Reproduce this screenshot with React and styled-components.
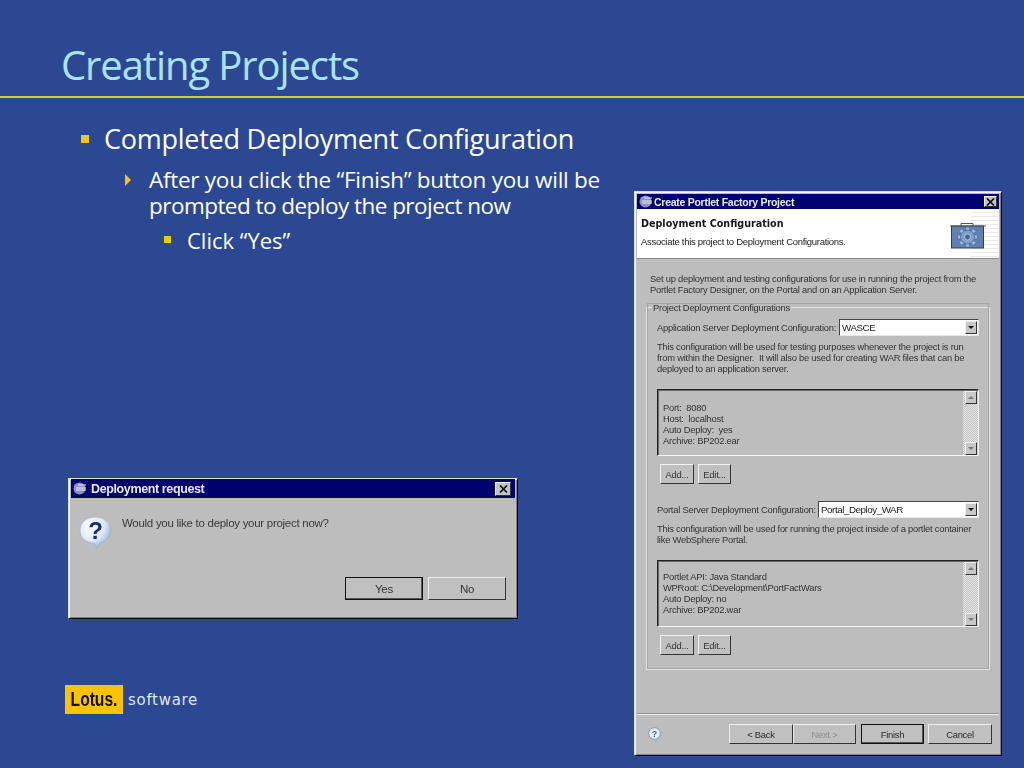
import React from 'react';
import styled, { createGlobalStyle } from 'styled-components';

const GlobalStyle = createGlobalStyle`
  html, body {
    margin: 0;
    padding: 0;
    background: #2c4892;
  }
`;

const Slide = styled.div`
  width: 1024px;
  height: 768px;
  overflow: hidden;
  background: #2c4892;
  font-family: "DejaVu Sans", sans-serif;
  color: #fff;
`;

const TitleBar = styled.header`
  height: 98px;
  box-sizing: border-box;
  padding: 40px 0 0 61px;
  border-bottom: 2px solid #eec22e;
`;

const Title = styled.h1`
  margin: 0;
  font-family: "Open Sans", sans-serif;
  font-weight: 400;
  font-size: 40px;
  letter-spacing: -1.1px;
  line-height: 50px;
  color: #a9e4fb;
  white-space: nowrap;
`;

const Body = styled.div`
  display: flex;
`;

const LeftColumn = styled.div`
  width: 634px;
  flex: none;
`;

const Bullets = styled.div`
  height: 380px;
  box-sizing: border-box;
  padding: 23px 0 0 81px;
`;

const Bullet = styled.div`
  display: flex;
  font-family: "Open Sans", sans-serif;
  font-size: ${p => p.$size}px;
  letter-spacing: ${p => p.$track}px;
  line-height: ${p => p.$line}px;
  margin-left: ${p => p.$indent || 0}px;
  margin-top: ${p => p.$top || 0}px;
  white-space: nowrap;
`;

const BulletLine = styled.div`
  letter-spacing: ${p => p.$track}px;
`;

const Square = styled.span`
  flex: none;
  width: ${p => p.$box}px;
  height: ${p => p.$box}px;
  background: #f6c21d;
  margin-top: ${p => p.$top}px;
  margin-right: ${p => p.$gap}px;
`;

const Arrow = styled.span`
  flex: none;
  width: 0;
  height: 0;
  border-left: 6px solid #f6c21d;
  border-top: 6px solid transparent;
  border-bottom: 6px solid transparent;
  margin-top: 7px;
  margin-right: 18px;
`;

const Win = styled.div`
  box-sizing: border-box;
  background: #bdbdbd;
  border: 1px solid #0b0b0b;
  border-top-color: #dcdcdc;
  border-left-color: #dcdcdc;
  box-shadow: inset 1px 1px 0 #f4f4f4, inset -1px -1px 0 #808080;
  padding: 2px;
  display: flex;
  flex-direction: column;
  font-family: "Liberation Sans", sans-serif;
  font-size: 9.4px;
  letter-spacing: -0.24px;
  color: #333;
  filter: blur(0.35px);
`;

const SmallWin = styled(Win)`
  width: 450px;
  height: 141px;
  margin-left: 68px;
  padding-top: 0;
`;

const BigWin = styled(Win)`
  width: 368px;
  height: 565px;
  margin-top: 93px;
`;

const Caption = styled.div`
  flex: none;
  height: ${p => p.$h}px;
  background: #00006e;
  display: flex;
  align-items: center;
  padding: 0 ${p => p.$right}px 0 2px;
  color: #e9e9f4;
  font-family: "Liberation Sans", sans-serif;
  font-weight: 700;
  font-size: ${p => p.$size}px;
  letter-spacing: ${p => p.$track}px;
`;

const CaptionText = styled.span`
  margin-left: ${p => p.$gap}px;
  flex: 1;
  white-space: nowrap;
`;

const CloseBox = styled.span`
  flex: none;
  width: ${p => p.$s}px;
  height: ${p => p.$s - 2}px;
  background: #c4c4c4;
  border: 1px solid;
  border-color: #f0f0f0 #333 #333 #f0f0f0;
  box-sizing: border-box;
  display: flex;
  align-items: center;
  justify-content: center;
`;

const Banner = styled.div`
  flex: none;
  height: 50px;
  box-sizing: border-box;
  padding: 8px 0 0 4px;
  background: repeating-linear-gradient(180deg, #fff 0 3px, #e6e8ee 3px 4px) right top / 28px 100% no-repeat, #fff;
  border-bottom: 1px solid #8a8a8a;
  position: relative;
`;

const BannerTitle = styled.div`
  font-family: "DejaVu Sans", sans-serif;
  font-weight: 700;
  font-size: 9.6px;
  letter-spacing: 0;
  line-height: 13px;
  color: #161616;
`;

const BannerText = styled.div`
  font-size: 9.5px;
  letter-spacing: -0.3px;
  line-height: 12px;
  margin-top: 6px;
  color: #222;
`;

const BannerIcon = styled.svg`
  position: absolute;
  right: 13px;
  top: 14px;
`;

const WizardBody = styled.div`
  flex: 1;
  padding: 14px 9px 0 9px;
`;

const Para = styled.p`
  margin: ${p => p.$margin || '0'};
  line-height: 11px;
  white-space: pre;
`;

const Group = styled.fieldset`
  margin: 7px 0 0;
  padding: 2px 10px 13px 10px;
  height: 368px;
  box-sizing: border-box;
  min-width: 0;
  border: 1px solid #e4e4e4;
  outline: 1px solid #a5a5a5;
  outline-offset: -2px;
`;

const Legend = styled.legend`
  padding: 0 1px;
  margin-left: -5px;
  line-height: 11px;
  background: #bdbdbd;
`;

const FieldRow = styled.div`
  display: flex;
  align-items: center;
  justify-content: space-between;
  height: 17px;
  margin-top: ${p => p.$top || 0}px;
  white-space: nowrap;
`;

const Select = styled.div`
  width: ${p => p.$w}px;
  height: 17px;
  box-sizing: border-box;
  background: #fff;
  border: 1px solid;
  border-color: #444 #e8e8e8 #e8e8e8 #444;
  display: flex;
  align-items: center;
  padding: 0 1px 0 2px;
  font-size: 9.8px;
  letter-spacing: -0.45px;
  color: #222;
`;

const SelectValue = styled.span`
  flex: 1;
`;

const ArrowBtn = styled.span`
  flex: none;
  width: 12px;
  height: 13px;
  box-sizing: border-box;
  background: #c8c8c8;
  border: 1px solid;
  border-color: #eee #333 #333 #eee;
  display: flex;
  align-items: center;
  justify-content: center;
  color: ${p => p.$color || '#111'};
`;

const Tri = styled.span`
  width: 0;
  height: 0;
  border-left: 3px solid transparent;
  border-right: 3px solid transparent;
  ${p => (p.$up ? 'border-bottom: 3px solid currentColor;' : 'border-top: 3px solid currentColor;')}
`;

const ListBox = styled.div`
  height: 67px;
  margin-top: ${p => p.$top}px;
  box-sizing: border-box;
  border: 1px solid;
  border-color: #222 #f2f2f2 #f4f4f4 #222;
  box-shadow: inset 1px 1px 0 #666;
  display: flex;
  background: #bdbdbd;
`;

const ListText = styled.div`
  flex: 1;
  padding: ${p => p.$top}px 0 0 5px;
  line-height: 11px;
  white-space: pre;
`;

const ScrollTrack = styled.div`
  flex: none;
  width: 15px;
  margin: 1px 0 0;
  display: flex;
  flex-direction: column;
  justify-content: space-between;
  align-items: center;
  background: repeating-conic-gradient(#e4e4e4 0 25%, #c4c4c4 0 50%) 0 0 / 2px 2px;
`;

const ButtonRow = styled.div`
  display: flex;
  gap: ${p => p.$gap}px;
  margin: ${p => p.$margin};
`;

const SmallBtn = styled.span`
  width: ${p => p.$w}px;
  height: 20px;
  box-sizing: border-box;
  background: #c0c0c0;
  border: 1px solid;
  border-color: #f2f2f2 #333 #333 #f2f2f2;
  display: flex;
  align-items: center;
  justify-content: center;
`;

const Footer = styled.div`
  flex: none;
  height: 40px;
  box-sizing: border-box;
  border-top: 1px solid #8d8d8d;
  box-shadow: inset 0 1px 0 #f0f0f0;
  display: flex;
  align-items: flex-start;
  padding: 10px 7px 0 11px;
`;

const HelpIcon = styled.svg`
  flex: none;
  margin: 3px auto 0 0;
`;

const WizBtn = styled.span`
  width: ${p => p.$w}px;
  height: 20px;
  box-sizing: border-box;
  background: #c0c0c0;
  border: 1px solid;
  border-color: #eee #333 #333 #eee;
  ${p => p.$default && 'outline: 1px solid #111; outline-offset: -1px; box-shadow: inset -1px -1px 0 #555;'}
  display: flex;
  align-items: center;
  justify-content: center;
  color: ${p => (p.$disabled ? '#8b8b8b' : '#2a2a2a')};
  margin-left: ${p => p.$left || 0}px;
`;

const Message = styled.div`
  flex: 1;
  display: flex;
  padding: 18px 0 0 8px;
`;

const MessageText = styled.div`
  margin-left: 10px;
  font-size: 11.5px;
  letter-spacing: -0.28px;
  line-height: 15px;
  color: #3a3a3a;
`;

const DialogBtns = styled.div`
  display: flex;
  justify-content: flex-end;
  gap: 5px;
  padding: 0 9px 16px 0;
`;

const DialogBtn = styled.span`
  width: 78px;
  height: 23px;
  box-sizing: border-box;
  background: #c0c0c0;
  border: 1px solid;
  border-color: #eee #333 #333 #eee;
  ${p => p.$default && 'outline: 1px solid #111; outline-offset: -1px; box-shadow: inset -1px -1px 0 #555;'}
  display: flex;
  align-items: center;
  justify-content: center;
  font-size: 11.5px;
  color: #333;
`;

const LogoRow = styled.div`
  display: flex;
  align-items: center;
  margin: 66px 0 0 65px;
`;

const LogoBox = styled.div`
  width: 58px;
  height: 29px;
  background: #fcc400;
  color: #111;
  display: flex;
  align-items: center;
  justify-content: center;
  font-family: "Liberation Sans", sans-serif;
  font-weight: 700;
  font-size: 20px;
`;

const LogoMark = styled.span`
  display: inline-block;
  transform: scaleX(0.78);
`;

const LogoWord = styled.span`
  margin-left: 5px;
  font-family: "DejaVu Sans", sans-serif;
  font-size: 15px;
  letter-spacing: 0.7px;
  color: #dfe6f5;
`;

const EclipseIcon = () => (
  <svg width="13" height="13" viewBox="0 0 13 13" style={{ flex: 'none' }}>
    <circle cx="6.5" cy="6.5" r="6" fill="#8f8fc4" />
    <path d="M5 3h8M3 6h10M3 8h10" stroke="#e8e8f4" strokeWidth="1" fill="none" />
  </svg>
);

const CloseX = () => (
  <svg width="9" height="8" viewBox="0 0 9 8">
    <path d="M1 0.5l7 7M8 0.5l-7 7" stroke="#111" strokeWidth="1.7" fill="none" />
  </svg>
);

const QuestionIcon = () => (
  <svg width="33" height="34" viewBox="0 0 33 34" style={{ flex: 'none' }}>
    <defs>
      <radialGradient id="bubble" cx="35%" cy="30%" r="75%">
        <stop offset="0%" stopColor="#ffffff" />
        <stop offset="60%" stopColor="#dbe8f6" />
        <stop offset="100%" stopColor="#8aa9d4" />
      </radialGradient>
    </defs>
    <path d="M16.500 1C25 1 32 6.500 32 14S26 26 21 27L18 33L15.500 27.500C7 27 1 22 1 14S8 1 16.500 1Z" fill="url(#bubble)" stroke="#9ab0d0" strokeWidth="0.7" />
    <text x="16.500" y="23" textAnchor="middle" fontFamily="Liberation Sans, sans-serif" fontWeight="700" fontSize="24" fill="#1d2c78">?</text>
  </svg>
);

const TEETH = [0, 45, 90, 135, 180, 225, 270, 315];

const GearCase = () => (
  <BannerIcon width="36" height="26" viewBox="0 0 36 26">
    <path d="M11 3V0.500h12V3" fill="none" stroke="#555" strokeWidth="1" />
    <rect x="1.500" y="3" width="32" height="22" fill="#5f81b0" stroke="#27405f" />
    <path d="M0 3h36" stroke="#555" strokeWidth="1" />
    <g transform="translate(17.500 14)">
      {TEETH.map(a => (
        <rect key={a} x="-2" y="-10" width="4" height="5" fill="#9db8da" stroke="#35598c" strokeWidth="0.5" transform={`rotate(${a})`} />
      ))}
      <circle r="7" fill="#7f9fc8" stroke="#35598c" strokeWidth="0.6" />
      <circle r="3" fill="#3f6496" stroke="#c4d5ea" strokeWidth="0.8" />
    </g>
  </BannerIcon>
);

const Scroll = () => (
  <ScrollTrack>
    <ArrowBtn $color="#777"><Tri $up /></ArrowBtn>
    <ArrowBtn $color="#777"><Tri /></ArrowBtn>
  </ScrollTrack>
);

const App = () => (
  <Slide>
    <GlobalStyle />
    <TitleBar>
      <Title>Creating Projects</Title>
    </TitleBar>
    <Body>
      <LeftColumn>
        <Bullets>
          <Bullet $size={27} $track={-0.25} $line={36}>
            <Square $box={8} $top={14} $gap={15} />
            Completed Deployment Configuration
          </Bullet>
          <Bullet $size={22.5} $line={26} $indent={44} $top={10}>
            <Arrow />
            <div>
              <BulletLine $track={-0.27}>After you click the “Finish” button you will be</BulletLine>
              <BulletLine $track={-0.54}>prompted to deploy the project now</BulletLine>
            </div>
          </Bullet>
          <Bullet $size={22} $track={0} $line={26} $indent={83} $top={8}>
            <Square $box={7} $top={9} $gap={16} />
            Click “Yes”
          </Bullet>
        </Bullets>
        <SmallWin>
          <Caption $h={19} $size={12.5} $track={-0.38} $right={4}>
            <EclipseIcon />
            <CaptionText $gap={5}>Deployment request</CaptionText>
            <CloseBox $s={16}><CloseX /></CloseBox>
          </Caption>
          <Message>
            <QuestionIcon />
            <MessageText>Would you like to deploy your project now?</MessageText>
          </Message>
          <DialogBtns>
            <DialogBtn $default>Yes</DialogBtn>
            <DialogBtn>No</DialogBtn>
          </DialogBtns>
        </SmallWin>
        <LogoRow>
          <LogoBox><LogoMark>Lotus.</LogoMark></LogoBox>
          <LogoWord>software</LogoWord>
        </LogoRow>
      </LeftColumn>
      <BigWin>
        <Caption $h={15} $size={10.5} $track={-0.27} $right={2}>
          <EclipseIcon />
          <CaptionText $gap={2}>Create Portlet Factory Project</CaptionText>
          <CloseBox $s={13}><CloseX /></CloseBox>
        </Caption>
        <Banner>
          <BannerTitle>Deployment Configuration</BannerTitle>
          <BannerText>Associate this project to Deployment Configurations.</BannerText>
          <GearCase />
        </Banner>
        <WizardBody>
          <Para $margin="0 0 0 4px">{'Set up deployment and testing configurations for use in running the project from the\nPortlet Factory Designer, on the Portal and on an Application Server.'}</Para>
          <Group>
            <Legend>Project Deployment Configurations</Legend>
            <FieldRow $top={4}>
              <span>Application Server Deployment Configuration:</span>
              <Select $w={140}>
                <SelectValue>WASCE</SelectValue>
                <ArrowBtn><Tri /></ArrowBtn>
              </Select>
            </FieldRow>
            <Para $margin="5px 0 0">{'This configuration will be used for testing purposes whenever the project is run\nfrom within the Designer.  It will also be used for creating WAR files that can be\ndeployed to an application server.'}</Para>
            <ListBox $top={15}>
              <ListText $top={12}>{'Port:  8080\nHost:  localhost\nAuto Deploy:  yes\nArchive: BP202.ear'}</ListText>
              <Scroll />
            </ListBox>
            <ButtonRow $gap={4} $margin="8px 0 0 3px">
              <SmallBtn $w={34}>Add...</SmallBtn>
              <SmallBtn $w={33}>Edit...</SmallBtn>
            </ButtonRow>
            <FieldRow $top={17}>
              <span>Portal Server Deployment Configuration:</span>
              <Select $w={161}>
                <SelectValue>Portal_Deploy_WAR</SelectValue>
                <ArrowBtn><Tri /></ArrowBtn>
              </Select>
            </FieldRow>
            <Para $margin="5px 0 0">{'This configuration will be used for running the project inside of a portlet container\nlike WebSphere Portal.'}</Para>
            <ListBox $top={15}>
              <ListText $top={10}>{'Portlet API: Java Standard\nWPRoot: C:\\Development\\PortFactWars\nAuto Deploy: no\nArchive: BP202.war'}</ListText>
              <Scroll />
            </ListBox>
            <ButtonRow $gap={4} $margin="8px 0 0 3px">
              <SmallBtn $w={34}>Add...</SmallBtn>
              <SmallBtn $w={33}>Edit...</SmallBtn>
            </ButtonRow>
          </Group>
        </WizardBody>
        <Footer>
          <HelpIcon width="13" height="13" viewBox="0 0 13 13">
            <circle cx="6.500" cy="6.500" r="5.800" fill="#e8eef8" stroke="#7f95bd" />
            <text x="6.500" y="10" textAnchor="middle" fontFamily="Liberation Sans, sans-serif" fontWeight="700" fontSize="9" fill="#4a64a0">?</text>
          </HelpIcon>
          <WizBtn $w={64}>&lt; Back</WizBtn>
          <WizBtn $w={63} $disabled>Next &gt;</WizBtn>
          <WizBtn $w={63} $left={5} $default>Finish</WizBtn>
          <WizBtn $w={64} $left={4}>Cancel</WizBtn>
        </Footer>
      </BigWin>
    </Body>
  </Slide>
);

export default App;
